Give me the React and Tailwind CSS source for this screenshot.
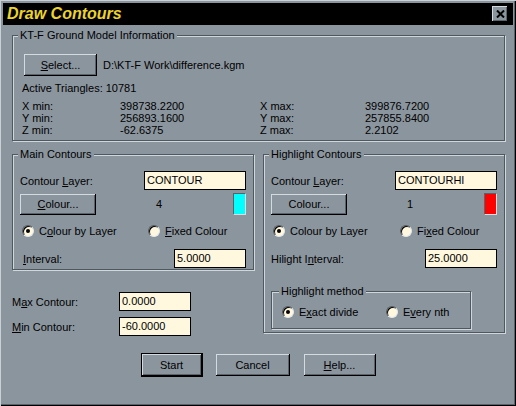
import React from 'react';

const U = ({ children }) => <span className="underline underline-offset-[1px]">{children}</span>;

const Button = ({ children, className = '', def = false }) => (
  <div
    className={`flex items-center justify-center bg-[#8b959e] shadow-[inset_-1px_-1px_0_#000,inset_1px_1px_0_#d3dae0,inset_-2px_-2px_0_#5a636b] ${
      def ? 'outline outline-1 outline-black' : ''
    } ${className}`}
  >
    <span className="mt-[-1px]">{children}</span>
  </div>
);

const Field = ({ value, className = '' }) => (
  <div className={`h-[19px] border border-black bg-[#fff7de] pl-[2px] leading-[17px] ${className}`}>{value}</div>
);

const Radio = ({ checked, children, className = '' }) => (
  <div className={`flex items-center gap-[5px] ${className}`}>
    <span className="flex h-[12px] w-[12px] items-center justify-center rounded-full border border-[#4f575f] border-b-[#e2e7eb] border-r-[#e2e7eb] bg-[#fff7de] shadow-[inset_1px_1px_0_#000]">
      {checked && <span className="h-[4px] w-[4px] rounded-full bg-black" />}
    </span>
    <span>{children}</span>
  </div>
);

const Group = ({ title, className = '', legend = 'ml-[5px]', children }) => (
  <fieldset
    className={`m-0 min-w-0 border border-[#4f575f] p-0 shadow-[inset_1px_1px_0_#cfd6dc,1px_1px_0_#cfd6dc] ${className}`}
  >
    <legend className={`bg-[#8b959e] px-[2px] leading-[12px] ${legend}`}>{title}</legend>
    {children}
  </fieldset>
);

const Swatch = ({ className }) => (
  <div className={`h-[22px] w-[13px] border border-[#d6dce2] border-l-[#59626a] border-t-[#59626a] ${className}`} />
);

export default function App() {
  return (
    <div className="h-[406px] w-[516px] bg-[#8b959e] p-[3px] font-['Liberation_Sans',Arial,sans-serif] text-[11px] leading-[12px] text-black shadow-[inset_1px_1px_0_#c9d0d6,inset_-1px_-1px_0_#000,inset_-2px_-2px_0_#5a636b]">
      {/* title bar */}
      <div className="flex h-[22px] items-center justify-between bg-black pl-[4px] pr-[5px]">
        <span className="text-[16px] font-bold italic leading-[18px] text-[#ecd42a]">Draw Contours</span>
        <div className="flex h-[16px] w-[16px] items-center justify-center bg-[#8b959e] shadow-[inset_-1px_-1px_0_#000,inset_1px_1px_0_#d3dae0,inset_-2px_-2px_0_#5a636b]">
          <svg width="9" height="8" viewBox="0 0 9 8">
            <path d="M1 0.5 L8 7.5 M8 0.5 L1 7.5" stroke="#000" strokeWidth="2" />
          </svg>
        </div>
      </div>

      <div className="flex flex-col pl-[9px] pr-[8px]">
        {/* ground model */}
        <Group title="KT-F Ground Model Information" className="mt-[4px]">
          <div className="pb-[4px] pl-[9px] pt-[13px]">
            <div className="flex items-center gap-[6px]">
              <Button className="ml-[2px] h-[22px] w-[73px]">
                <U>S</U>elect...
              </Button>
              <span>D:\KT-F Work\difference.kgm</span>
            </div>
            <div className="mt-[6px]">Active Triangles: 10781</div>
            <div className="mt-[6px] grid grid-cols-[98px_140px_105px_1fr]">
              <span>X min:</span>
              <span>398738.2200</span>
              <span>X max:</span>
              <span>399876.7200</span>
              <span>Y min:</span>
              <span>256893.1600</span>
              <span>Y max:</span>
              <span>257855.8400</span>
              <span>Z min:</span>
              <span>-62.6375</span>
              <span>Z max:</span>
              <span>2.2102</span>
            </div>
          </div>
        </Group>

        <div className="mt-[7px] flex gap-[9px]">
          {/* left column */}
          <div className="flex w-[242px] flex-col">
            <Group title="Main Contours">
              <div className="px-[7px] pb-[1px] pt-[11px]">
                <div className="flex h-[19px] items-center justify-between">
                  <span>
                    Contour <U>L</U>ayer:
                  </span>
                  <Field value="CONTOUR" className="w-[102px]" />
                </div>
                <div className="mt-[3px] flex h-[22px] items-center">
                  <Button className="h-[21px] w-[76px]">
                    <U>C</U>olour...
                  </Button>
                  <span className="ml-[60px]">4</span>
                  <Swatch className="ml-auto bg-[#00ffff]" />
                </div>
                <div className="mt-[9px] flex h-[14px] items-center">
                  <Radio checked className="ml-[2px] w-[126px]">
                    C<U>o</U>lour by Layer
                  </Radio>
                  <Radio>
                    <U>F</U>ixed Colour
                  </Radio>
                </div>
                <div className="mt-[11px] flex items-center justify-between">
                  <span className="ml-[3px]">
                    <U>I</U>nterval:
                  </span>
                  <Field value="5.0000" className="w-[72px]" />
                </div>
              </div>
            </Group>

            <div className="mt-[22px] flex items-center">
              <span className="w-[107px]">
                M<U>a</U>x Contour:
              </span>
              <Field value="0.0000" className="w-[72px]" />
            </div>
            <div className="mt-[6px] flex items-center">
              <span className="w-[107px]">
                <U>M</U>in Contour:
              </span>
              <Field value="-60.0000" className="w-[72px]" />
            </div>
          </div>

          {/* right column */}
          <div className="flex w-[242px] flex-col">
            <Group title="Highlight Contours">
              <div className="px-[7px] pb-[3px] pt-[11px]">
                <div className="flex h-[19px] items-center justify-between">
                  <span>
                    Contour <U>L</U>ayer:
                  </span>
                  <Field value="CONTOURHI" className="w-[102px]" />
                </div>
                <div className="mt-[3px] flex h-[22px] items-center">
                  <Button className="h-[21px] w-[76px]">Colour...</Button>
                  <span className="ml-[60px]">1</span>
                  <Swatch className="ml-auto bg-[#ff0000]" />
                </div>
                <div className="mt-[9px] flex h-[14px] items-center">
                  <Radio checked className="ml-[2px] w-[127px]">
                    Colour by Layer
                  </Radio>
                  <Radio>
                    Fi<U>x</U>ed Colour
                  </Radio>
                </div>
                <div className="mt-[11px] flex items-center justify-between">
                  <span>
                    Hilight I<U>n</U>terval:
                  </span>
                  <Field value="25.0000" className="w-[72px]" />
                </div>
                <Group title="Highlight method" className="mt-[17px] w-[200px]" legend="ml-[7px]">
                  <div className="flex h-[31px] items-center pb-[2px] pl-[10px]">
                    <Radio checked className="w-[104px]">
                      E<U>x</U>act divide
                    </Radio>
                    <Radio>
                      E<U>v</U>ery nth
                    </Radio>
                  </div>
                </Group>
              </div>
            </Group>
          </div>
        </div>

        {/* action buttons */}
        <div className="mt-[18px] flex justify-center gap-[14px]">
          <Button def className="h-[22px] w-[60px]">
            Start
          </Button>
          <Button className="h-[22px] w-[74px]">Cancel</Button>
          <Button className="h-[22px] w-[72px]">
            <U>H</U>elp...
          </Button>
        </div>
      </div>
    </div>
  );
}
